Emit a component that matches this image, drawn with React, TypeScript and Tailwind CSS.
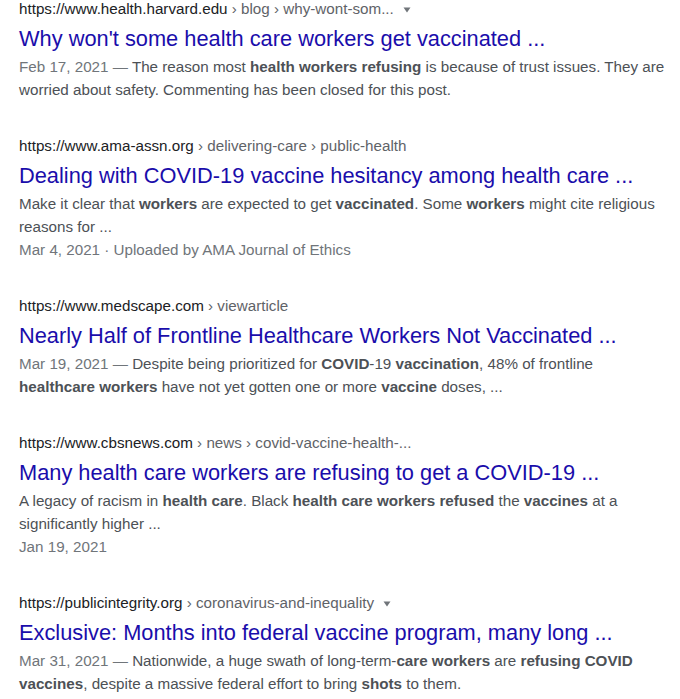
import React from "react";

type Piece = string | { b: string };

interface Result {
  site: string;
  crumbs: string[];
  menu: boolean;
  title: string;
  lines: Piece[][];
  datePrefix?: string;
  footer?: string;
}

const results: Result[] = [
  {
    site: "https://www.health.harvard.edu",
    crumbs: ["blog", "why-wont-som..."],
    menu: true,
    title: "Why won't some health care workers get vaccinated ...",
    datePrefix: "Feb 17, 2021",
    lines: [
      [
        "The reason most ",
        { b: "health workers refusing" },
        " is because of trust issues. They are",
      ],
      ["worried about safety. Commenting has been closed for this post."],
    ],
  },
  {
    site: "https://www.ama-assn.org",
    crumbs: ["delivering-care", "public-health"],
    menu: false,
    title: "Dealing with COVID-19 vaccine hesitancy among health care ...",
    lines: [
      [
        "Make it clear that ",
        { b: "workers" },
        " are expected to get ",
        { b: "vaccinated" },
        ". Some ",
        { b: "workers" },
        " might cite religious",
      ],
      ["reasons for ..."],
    ],
    footer: "Mar 4, 2021 · Uploaded by AMA Journal of Ethics",
  },
  {
    site: "https://www.medscape.com",
    crumbs: ["viewarticle"],
    menu: false,
    title: "Nearly Half of Frontline Healthcare Workers Not Vaccinated ...",
    datePrefix: "Mar 19, 2021",
    lines: [
      [
        "Despite being prioritized for ",
        { b: "COVID" },
        "-19 ",
        { b: "vaccination" },
        ", 48% of frontline",
      ],
      [
        { b: "healthcare workers" },
        " have not yet gotten one or more ",
        { b: "vaccine" },
        " doses, ...",
      ],
    ],
  },
  {
    site: "https://www.cbsnews.com",
    crumbs: ["news", "covid-vaccine-health-..."],
    menu: false,
    title: "Many health care workers are refusing to get a COVID-19 ...",
    lines: [
      [
        "A legacy of racism in ",
        { b: "health care" },
        ". Black ",
        { b: "health care workers refused" },
        " the ",
        { b: "vaccines" },
        " at a",
      ],
      ["significantly higher ..."],
    ],
    footer: "Jan 19, 2021",
  },
  {
    site: "https://publicintegrity.org",
    crumbs: ["coronavirus-and-inequality"],
    menu: true,
    title: "Exclusive: Months into federal vaccine program, many long ...",
    datePrefix: "Mar 31, 2021",
    lines: [
      [
        "Nationwide, a huge swath of long-term-",
        { b: "care workers" },
        " are ",
        { b: "refusing COVID" },
      ],
      [
        { b: "vaccines" },
        ", despite a massive federal effort to bring ",
        { b: "shots" },
        " to them.",
      ],
    ],
  },
];

const SearchResult: React.FC<{ r: Result }> = ({ r }) => {
  return (
    <div className="flex flex-col">
      <div className="text-[15.2px] leading-[14px] whitespace-nowrap">
        <span className="text-[#202124]">{r.site}</span>
        {r.crumbs.map((c) => (
          <span key={c} className="text-[#5f6368]">
            {" › "}
            {c}
          </span>
        ))}
        {r.menu && (
          <svg
            width="10"
            height="6"
            viewBox="0 0 10 6"
            className="inline-block align-middle ml-[8px]"
          >
            <path d="M1.5 0.5 L8.5 0.5 L5 5.5 Z" fill="#70757a" />
          </svg>
        )}
      </div>
      <div className="mt-[10px] text-[21.8px] leading-[26px] text-[#1a0dab] whitespace-nowrap">
        {r.title}
      </div>
      <div className="mt-[3px] text-[15.2px] leading-[23px] text-[#4d5156]">
        {r.lines.map((line, i) => (
          <div key={i} className="whitespace-nowrap">
            {i === 0 && r.datePrefix && (
              <span className="text-[#70757a]">{r.datePrefix} — </span>
            )}
            {line.map((p, j) =>
              typeof p === "string" ? (
                <span key={j}>{p}</span>
              ) : (
                <b key={j} className="font-bold text-[#4d5156]">
                  {p.b}
                </b>
              )
            )}
          </div>
        ))}
        {r.footer && <div className="text-[#70757a]">{r.footer}</div>}
      </div>
    </div>
  );
};

const App: React.FC = () => {
  return (
    <div
      className="w-[680px] h-[699px] overflow-hidden bg-white pl-[19px] pt-[2px] flex flex-col gap-[38px]"
      style={{ fontFamily: '"Liberation Sans", Arial, sans-serif' }}
    >
      {results.map((r) => (
        <SearchResult key={r.site} r={r} />
      ))}
    </div>
  );
};

export default App;
